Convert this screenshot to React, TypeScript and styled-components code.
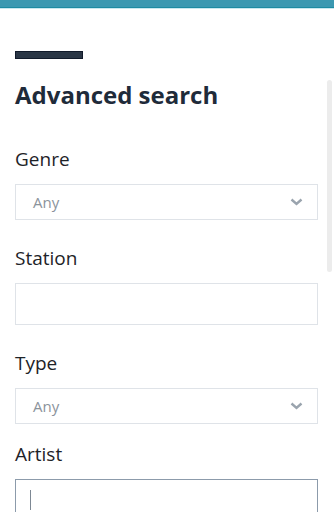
import styled, { createGlobalStyle } from "styled-components";

const GlobalStyle = createGlobalStyle`
  html, body {
    margin: 0;
    padding: 0;
    background: #fff;
    font-family: "Open Sans", "Liberation Sans", sans-serif;
  }
`;

const TopBar = styled.div`
  height: 7px;
  background: #3b98b1;
  border-bottom: 1px solid #1d8ba2;
  box-shadow: 0 1px 0 #c8e7ef;
`;

const Body = styled.div`
  display: flex;
  align-items: flex-start;
`;

const Form = styled.div`
  width: 303px;
  margin-left: 15px;
  padding-top: 43px;
  display: flex;
  flex-direction: column;
`;

const Accent = styled.div`
  width: 66px;
  height: 6px;
  background: #2a3645;
  border: 1px solid #111a2a;
`;

const Title = styled.h1`
  margin: 20px 0 0;
  font-size: 24px;
  line-height: 32px;
  font-weight: 700;
  color: #1f2b3a;
`;

const Label = styled.label<{ $gap: number }>`
  display: block;
  margin-top: ${(p) => p.$gap}px;
  font-size: 19px;
  line-height: 26px;
  color: #1e2328;
`;

const SelectBox = styled.div`
  margin-top: 12px;
  height: 34px;
  border: 1px solid #dfe3e8;
  display: flex;
  align-items: center;
  justify-content: space-between;
  padding: 0 14px 0 17px;
  font-size: 15px;
  color: #8b939c;
`;

const TextBox = styled.div<{ $focused?: boolean }>`
  margin-top: 12px;
  height: 40px;
  border: 1px solid ${(p) => (p.$focused ? "#8c9bab" : "#dfe3e8")};
  display: flex;
  align-items: center;
  padding-left: 14px;
`;

const Caret = styled.span`
  width: 1px;
  height: 20px;
  background: #7d8894;
`;

const ScrollThumb = styled.div`
  width: 5px;
  height: 192px;
  margin: 72px 2px 0 auto;
  border-radius: 3px;
  background: #ececec;
`;

const Chevron = () => (
  <svg width="13" height="8" viewBox="0 0 13 8">
    <path d="M1.5 1.5 L6.5 6 L11.5 1.5" fill="none" stroke="#9aa4ae" strokeWidth="2.4" />
  </svg>
);

export default function App() {
  return (
    <>
      <GlobalStyle />
      <TopBar />
      <Body>
        <Form>
          <Accent />
          <Title>Advanced search</Title>
          <Label $gap={35}>Genre</Label>
          <SelectBox>
            <span>Any</span>
            <Chevron />
          </SelectBox>
          <Label $gap={25}>Station</Label>
          <TextBox />
          <Label $gap={25}>Type</Label>
          <SelectBox>
            <span>Any</span>
            <Chevron />
          </SelectBox>
          <Label $gap={17}>Artist</Label>
          <TextBox $focused>
            <Caret />
          </TextBox>
        </Form>
        <ScrollThumb />
      </Body>
    </>
  );
}
